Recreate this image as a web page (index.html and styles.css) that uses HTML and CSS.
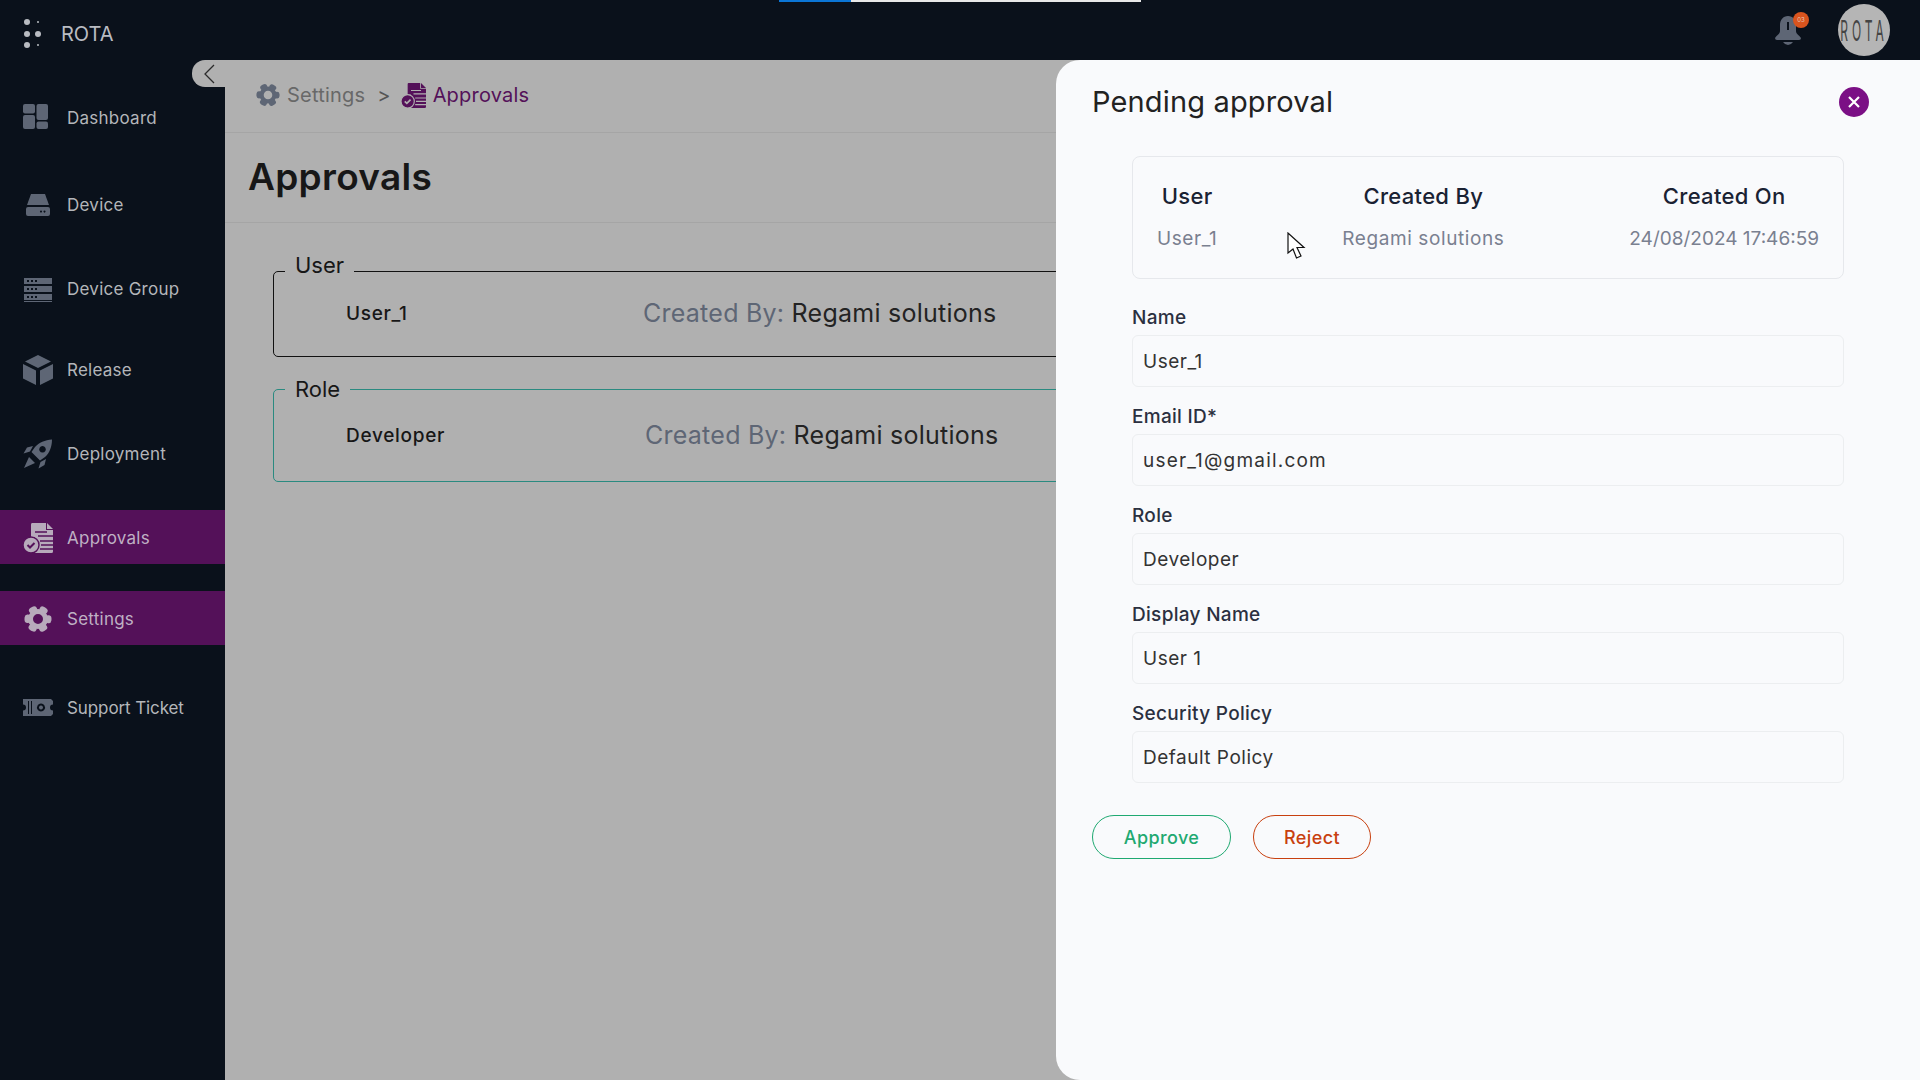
FILE: index.html
```html
<!DOCTYPE html>
<html lang="en">
<head>
    <meta charset="UTF-8">
    <meta name="viewport" content="width=device-width, initial-scale=1.0">
    <title>ROTA - Approvals</title>
    <link rel="stylesheet" href="styles.css">
</head>
<body>
    <svg class="icon-defs" aria-hidden="true">
        <symbol id="i-gear" viewBox="0 0 28 28">
            <circle cx="14" cy="14" r="7.500" fill="none" stroke="currentColor" stroke-width="5"/>
            <circle cx="14" cy="14" r="10.500" fill="none" stroke="currentColor" stroke-width="6" stroke-linecap="round" stroke-dasharray="2.500 8.500" stroke-dashoffset="1.250"/>
        </symbol>
        <symbol id="i-doc" viewBox="0 0 30 30">
            <path fill="currentColor" d="M8 0H23V7H30V28.500Q30 30 28.500 30H12V14H8V1.500Q8 0 9 0Z"/>
            <path fill="currentColor" d="M24 0L30 6H24Z"/>
            <path fill="none" stroke="var(--cut)" stroke-width="1.400" d="M12 9H24M15 13H30M17 18H30M18 22H30M17 26H30"/>
            <circle cx="8" cy="22" r="8" fill="currentColor" stroke="var(--cut)" stroke-width="1.400"/>
            <path fill="none" stroke="var(--cut)" stroke-width="2" d="M4.500 22L7 24.500L11.500 20"/>
        </symbol>
    </svg>

    <!-- Шапка -->
    <header class="topbar">
        <div class="progress"><div class="progress-fill"></div></div>
        <div class="brand">
            <svg class="brand-dots" width="17" height="29" viewBox="0 0 17 29" fill="#b9bcc2">
                <circle cx="3" cy="3" r="3"/><circle cx="14" cy="3" r="1"/>
                <circle cx="3" cy="15" r="3"/><circle cx="14" cy="15" r="3"/>
                <circle cx="3" cy="26" r="3"/><circle cx="14" cy="26" r="1"/>
            </svg>
            <span>ROTA</span>
        </div>
        <div class="topbar-right">
            <div class="bell">
                <svg width="28" height="32" viewBox="0 0 28 32" fill="#5e6675">
                    <path d="M14 2C19 2 22 6 22 11V17C22 20 25 21 27 24Q27 26 25 26H3Q1 26 1 24C3 21 6 20 6 17V11C6 6 9 2 14 2Z"/>
                    <path d="M9 28H19Q17 31 14 31Q11 31 9 28Z"/>
                    <rect x="13" y="8" width="2" height="8" fill="#0a111b"/>
                </svg>
                <span class="bell-badge">03</span>
            </div>
            <div class="avatar"><span>ROTA</span></div>
        </div>
    </header>

    <div class="layout">
        <!-- Боковое меню -->
        <nav class="sidebar">
            <a class="nav-item nav-dashboard">
                <span class="nav-icon">
                    <svg width="25" height="25" viewBox="0 0 25 25" fill="currentColor">
                        <rect width="12" height="9.500" rx="2"/><rect y="11" width="12" height="14" rx="2"/>
                        <rect x="13.500" width="11.500" height="16" rx="2"/><rect x="13.500" y="17.500" width="11.500" height="7.500" rx="2"/>
                    </svg>
                </span>
                Dashboard
            </a>
            <a class="nav-item nav-device">
                <span class="nav-icon">
                    <svg class="icon-device" width="24" height="22" viewBox="0 0 24 22" fill="currentColor">
                        <path d="M5 0H19L23 11H1Z"/>
                        <path fill-rule="evenodd" d="M2 13H22Q24 13 24 15V20Q24 22 22 22H2Q0 22 0 20V15Q0 13 2 13ZM15 16.500a1 1 0 1 0 .01 0ZM18.500 16.500a1 1 0 1 0 .01 0Z"/>
                    </svg>
                </span>
                Device
            </a>
            <a class="nav-item nav-group">
                <span class="nav-icon">
                    <svg width="28" height="24" viewBox="0 0 28 24" fill="currentColor">
                        <path fill-rule="evenodd" d="M0 0H28V6H0ZM3 2v2h2v-2ZM7 2v2h2v-2ZM11 2v2h2v-2Z"/>
                        <path fill-rule="evenodd" d="M0 8H28V14H0ZM3 10v2h2v-2ZM7 10v2h2v-2ZM11 10v2h2v-2Z"/>
                        <path fill-rule="evenodd" d="M0 16H28V22H0ZM3 18v2h2v-2ZM7 18v2h2v-2ZM11 18v2h2v-2Z"/>
                        <rect y="23" width="28" height="1"/>
                    </svg>
                </span>
                Device Group
            </a>
            <a class="nav-item nav-release">
                <span class="nav-icon">
                    <svg width="30" height="30" viewBox="0 0 30 30" fill="currentColor">
                        <path d="M15 0L28 6.500L15 13L2 6.500Z"/>
                        <path d="M0 9L13 15.500V30L0 23.500Z"/>
                        <path d="M30 9L17 15.500V30L30 23.500Z"/>
                    </svg>
                </span>
                Release
            </a>
            <a class="nav-item nav-deploy">
                <span class="nav-icon">
                    <svg width="30" height="30" viewBox="0 0 30 30" fill="currentColor">
                        <path fill-rule="evenodd" d="M29 0.500C22 1 16 3.500 12 8L8.500 13L17 21.500L22 18C26.500 14 29 8 29 0.500ZM19.500 7a3.300 3.300 0 1 0 .01 0Z"/>
                        <path d="M10 7L4 8.500L0.500 14.500L7 12.500Z"/>
                        <path d="M23 20L21.500 26L15.500 29.500L17.500 23Z"/>
                        <path d="M6 18L12 24L1 29Z"/>
                    </svg>
                </span>
                Deployment
            </a>
            <a class="nav-item nav-approvals is-active">
                <span class="nav-icon"><svg width="30" height="30"><use href="#i-doc"/></svg></span>
                Approvals
            </a>
            <a class="nav-item nav-settings is-active">
                <span class="nav-icon"><svg width="28" height="28"><use href="#i-gear"/></svg></span>
                Settings
            </a>
            <a class="nav-item nav-support">
                <span class="nav-icon">
                    <svg width="30" height="17" viewBox="0 0 30 17" fill="currentColor">
                        <path fill-rule="evenodd" d="M0 0H28L30 2V5.500A3 3 0 0 0 30 11.500V15L28 17H0V11.500A3 3 0 0 0 0 5.500ZM18 4.500a4 4 0 1 0 .01 0ZM18 6.500a2 2 0 1 1 -.01 0ZM5 2v13h1v-13ZM8 2v13h1v-13Z"/>
                    </svg>
                </span>
                Support Ticket
            </a>
        </nav>

        <!-- Основной блок -->
        <main class="content">
            <div class="breadcrumb">
                <svg class="crumb-gear" width="24" height="24"><use href="#i-gear"/></svg>
                <span class="crumb-parent">Settings</span>
                <span class="crumb-sep">&gt;</span>
                <svg class="crumb-doc" width="25" height="25"><use href="#i-doc"/></svg>
                <span class="crumb-current">Approvals</span>
            </div>
            <h1 class="page-title">Approvals</h1>
            <div class="groups">
                <fieldset class="group group-user">
                    <legend>User</legend>
                    <div class="group-row">
                        <span class="group-name">User_1</span>
                        <span class="group-meta"><span class="meta-key">Created By:</span> Regami solutions</span>
                    </div>
                </fieldset>
                <fieldset class="group group-role">
                    <legend>Role</legend>
                    <div class="group-row">
                        <span class="group-name">Developer</span>
                        <span class="group-meta"><span class="meta-key">Created By:</span> Regami solutions</span>
                    </div>
                </fieldset>
            </div>
        </main>
    </div>

    <button class="collapse-tab" aria-label="Collapse">
        <svg width="11" height="20" viewBox="0 0 11 20" fill="none" stroke="#2b2b2b" stroke-width="1.300"><path d="M10 1L1 10L10 19"/></svg>
    </button>

    <!-- Панель подтверждения -->
    <aside class="panel">
        <div class="panel-head">
            <h2>Pending approval</h2>
            <button class="panel-close" aria-label="Close">
                <svg width="12" height="12" viewBox="0 0 12 12" stroke="#fff" stroke-width="2.200"><path d="M1 1L11 11M11 1L1 11"/></svg>
            </button>
        </div>
        <div class="panel-body">
            <div class="summary">
                <div class="summary-col">
                    <div class="summary-head">User</div>
                    <div class="summary-value">User_1</div>
                </div>
                <div class="summary-col">
                    <div class="summary-head">Created By</div>
                    <div class="summary-value">Regami solutions</div>
                </div>
                <div class="summary-col">
                    <div class="summary-head">Created On</div>
                    <div class="summary-value summary-date">24/08/2024 17:46:59</div>
                </div>
            </div>
            <div class="field">
                <label>Name</label>
                <div class="field-value">User_1</div>
            </div>
            <div class="field">
                <label>Email ID*</label>
                <div class="field-value field-email">user_1@gmail.com</div>
            </div>
            <div class="field">
                <label>Role</label>
                <div class="field-value">Developer</div>
            </div>
            <div class="field">
                <label>Display Name</label>
                <div class="field-value">User 1</div>
            </div>
            <div class="field">
                <label>Security Policy</label>
                <div class="field-value">Default Policy</div>
            </div>
        </div>
        <div class="panel-actions">
            <button class="btn btn-approve">Approve</button>
            <button class="btn btn-reject">Reject</button>
        </div>
    </aside>

    <svg class="cursor" width="20" height="28" viewBox="0 0 20 28">
        <path d="M1 1V21L6 17L9.500 26L14 24L10 15.500H17Z" fill="#fff" stroke="#111" stroke-width="1.200"/>
    </svg>
</body>
</html>
```

FILE: styles.css
```css
* {
    box-sizing: border-box;
}

body {
    font-family: Inter, "Noto Sans", sans-serif;
    margin: 0;
    height: 100vh;
    overflow: hidden;
    background-color: #0a111b;
    color: #222;
}

.icon-defs {
    display: none;
}

/* Шапка */
.topbar {
    height: 60px;
    display: flex;
    align-items: center;
    justify-content: space-between;
    padding: 0 30px 0 24px;
    background-color: #0a111b;
    position: relative;
}

.progress {
    position: absolute;
    top: 0;
    left: 779px;
    width: 362px;
    height: 2px;
    background-color: #e8e8e8;
}

.progress-fill {
    width: 72px;
    height: 2px;
    background-color: #0b76d6;
}

.brand {
    display: flex;
    align-items: center;
    gap: 20px;
    padding-top: 7px;
    font-size: 20px;
    color: #b9bcc2;
}

.topbar-right {
    display: flex;
    align-items: center;
    gap: 36px;
}

.bell {
    position: relative;
    height: 32px;
}

.bell-badge {
    position: absolute;
    top: -2px;
    right: -7px;
    width: 16px;
    height: 16px;
    border-radius: 50%;
    background-color: #d9541e;
    color: #e8c8b8;
    font-size: 6px;
    line-height: 16px;
    text-align: center;
}

.avatar {
    width: 52px;
    height: 52px;
    border-radius: 50%;
    background-color: #b5b5b5;
    display: flex;
    align-items: center;
    justify-content: center;
    color: #444;
    font-size: 12px;
    letter-spacing: 4px;
    overflow: hidden;
}

.avatar span {
    transform: scaleY(2.400);
}

.layout {
    display: flex;
    height: calc(100vh - 60px);
}

/* Боковое меню */
.sidebar {
    width: 225px;
    flex-shrink: 0;
    padding-top: 30px;
    display: flex;
    flex-direction: column;
    background-color: #0a111b;
}

.nav-item {
    height: 54px;
    display: flex;
    align-items: center;
    gap: 14px;
    padding: 1px 0 0 23px;
    font-size: 17px;
    letter-spacing: .25px;
    color: #b4b6ba;
    --cut: #0a111b;
}

.nav-icon {
    width: 30px;
    display: flex;
    justify-content: center;
    color: #5e6675;
}

.nav-dashboard .nav-icon {
    justify-content: flex-start;
    margin-bottom: 2px;
}

.nav-group .nav-icon {
    margin-top: 3px;
}

.nav-device { margin-top: 33px; }
.nav-group { margin-top: 30px; }
.nav-release { margin-top: 27px; }
.nav-deploy { margin-top: 30px; }
.nav-approvals { margin-top: 30px; }
.nav-settings { margin-top: 27px; }
.nav-support { margin-top: 35px; letter-spacing: -.1px; }

.nav-item.is-active {
    background-color: #541159;
    color: #bfb0c4;
    --cut: #541159;
}

.nav-item.is-active .nav-icon {
    color: #b7aabb;
}

.collapse-tab {
    position: absolute;
    top: 60px;
    left: 192px;
    width: 33px;
    height: 27px;
    border: none;
    padding: 0 0 0 12px;
    border-radius: 13px 0 0 13px;
    background-color: #b0b0b0;
    display: flex;
    align-items: center;
}

/* Основной блок */
.content {
    flex: 1;
    background-color: #b0b0b0;
}

.breadcrumb {
    height: 73px;
    display: flex;
    align-items: center;
    padding: 0 0 2px 31px;
    border-bottom: 1px solid #a5a5a5;
    font-size: 20px;
    letter-spacing: .2px;
}

.crumb-gear {
    color: #5e6675;
    margin-right: 7px;
}

.crumb-parent {
    color: #686868;
}

.crumb-sep {
    color: #555;
    margin: 0 10px 0 12px;
}

.crumb-doc {
    color: #541159;
    margin-right: 7px;
    --cut: #b0b0b0;
}

.crumb-current {
    color: #541159;
}

.page-title {
    height: 90px;
    margin: 0;
    padding: 0 0 2px 23px;
    display: flex;
    align-items: center;
    border-bottom: 1px solid #a5a5a5;
    font-size: 37px;
    font-weight: 600;
    letter-spacing: .3px;
    color: #171717;
}

.groups {
    padding: 27px 0 0 48px;
}

.group {
    margin: 0;
    padding: 0;
    width: 1400px;
    border-radius: 5px;
    border: 1px solid #111;
}

.group legend {
    margin-left: 11px;
    padding: 0 10px;
    font-size: 22px;
    line-height: 30px;
    color: #171717;
}

.group-user {
    height: 107px;
}

.group-user legend {
    padding-bottom: 12px;
}

.group-role {
    height: 108px;
    margin-top: 17px;
    border-color: #2a8a80;
}

.group-row {
    height: 30px;
    display: flex;
    align-items: center;
    margin-top: 6px;
    padding-left: 72px;
}

.group-name {
    width: 297px;
    font-size: 19px;
    font-weight: 500;
    letter-spacing: .7px;
    color: #171717;
}

.group-meta {
    font-size: 25px;
    letter-spacing: .25px;
    color: #232323;
}

.group-role .group-row {
    margin-top: 16px;
}

.group-role .group-name {
    width: 299px;
}

.meta-key {
    color: #5e6675;
}

/* Панель */
.panel {
    position: absolute;
    top: 60px;
    left: 1056px;
    right: 0;
    bottom: 0;
    padding: 0 37px 0 36px;
    background-color: #f9fafc;
    border-radius: 24px 0 0 24px;
}

.panel-head {
    height: 84px;
    display: flex;
    align-items: center;
    justify-content: space-between;
}

.panel-head h2 {
    margin: 0 0 2px;
    font-size: 29px;
    font-weight: 400;
    letter-spacing: .15px;
    color: #222;
}

.panel-close {
    width: 30px;
    height: 30px;
    border: none;
    padding: 0;
    margin-right: 14px;
    border-radius: 50%;
    background-color: #7b0f85;
    display: flex;
    align-items: center;
    justify-content: center;
}

.panel-body {
    margin: 12px 0 0 40px;
    width: 712px;
}

.summary {
    height: 123px;
    display: flex;
    justify-content: space-between;
    padding: 0 24px;
    border: 1px solid #e6e8ec;
    border-radius: 8px;
}

.summary-col {
    text-align: center;
    padding-top: 25px;
}

.summary-head {
    font-size: 22px;
    font-weight: 500;
    line-height: 28px;
    letter-spacing: .3px;
    color: #1a2233;
}

.summary-value {
    margin-top: 16px;
    font-size: 19px;
    line-height: 26px;
    letter-spacing: .6px;
    color: #7a8090;
}

.summary-date {
    letter-spacing: 0;
}

.field {
    padding-top: 19px;
}

.summary + .field {
    padding-top: 28px;
}

.field label {
    display: block;
    margin-bottom: 7px;
    font-size: 19px;
    line-height: 21px;
    font-weight: 500;
    letter-spacing: .3px;
    color: #2b3040;
}

.field-value {
    height: 52px;
    padding: 0 10px;
    display: flex;
    align-items: center;
    border: 1px solid #eceef0;
    border-radius: 6px;
    font-size: 19px;
    letter-spacing: .5px;
    color: #333;
}

.field-email {
    letter-spacing: 1.200px;
}

.panel-actions {
    display: flex;
    gap: 22px;
    margin-top: 32px;
}

.btn {
    height: 44px;
    padding: 0;
    border-radius: 22px;
    background: none;
    font-family: inherit;
    font-size: 18px;
    font-weight: 500;
    letter-spacing: .4px;
}

.btn-approve {
    width: 139px;
    border: 1px solid #1fa971;
    color: #1fa971;
}

.btn-reject {
    width: 118px;
    border: 1px solid #c8400f;
    color: #c8400f;
}

.cursor {
    position: absolute;
    top: 232px;
    left: 1287px;
}
```
